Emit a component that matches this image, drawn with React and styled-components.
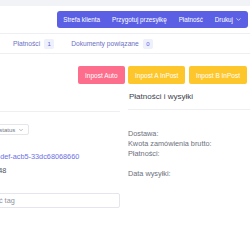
import React from "react";
import styled, { createGlobalStyle } from "styled-components";
import { ChevronDown } from "lucide-react";

const actions = [
  { label: "Strefa klienta" },
  { label: "Przygotuj przesyłkę" },
  { label: "Płatność" },
  { label: "Drukuj", menu: true }
];

const tabs = [
  { label: "Płatności", count: 1 },
  { label: "Dokumenty powiązane", count: 0 }
];

const shipping = [
  { label: "Dostawa:" },
  { label: "Kwota zamówienia brutto:" },
  { label: "Płatności:" },
  { label: "" },
  { label: "Data wysyłki:" }
];

export default function App() {
  return (
    <>
      <GlobalStyle />
      <Page>
        <Card>
          {/* Akcje zamówienia */}
          <TopBar>
            <ButtonGroup>
              {actions.map(a => (
                <GroupButton key={a.label}>
                  {a.label}
                  {a.menu && <ChevronDown size={7} strokeWidth={2.2} />}
                </GroupButton>
              ))}
            </ButtonGroup>
          </TopBar>

          {/* Zakładki */}
          <Tabs>
            {tabs.map(t => (
              <Tab key={t.label}>
                {t.label}
                <Badge>{t.count}</Badge>
              </Tab>
            ))}
          </Tabs>

          {/* Etykiety InPost */}
          <LabelRow>
            <LabelButton $tone="pink">Inpost Auto</LabelButton>
            <LabelButton $tone="yellow">Inpost A InPost</LabelButton>
            <LabelButton $tone="yellow">Inpost B InPost</LabelButton>
          </LabelRow>

          <Columns>
            <LeftCol>
              <LeftHeader />
              <StatusSelect>
                Zmień status
                <ChevronDown size={6} strokeWidth={2} />
              </StatusSelect>
              <OrderLink>3f1b2c4e-9a7d-4def-acb5-33dc68068660</OrderLink>
              <OrderNumber>#10048</OrderNumber>
              <TagInput placeholder="Wpisz, aby dodać tag" />
            </LeftCol>

            <RightCol>
              <SectionTitle>Płatności i wysyłki</SectionTitle>
              <InfoList>
                {shipping.map((s, i) => (
                  <InfoRow key={i}>{s.label}</InfoRow>
                ))}
              </InfoList>
            </RightCol>
          </Columns>
        </Card>
      </Page>
    </>
  );
}

const GlobalStyle = createGlobalStyle`
  html, body {
    margin: 0;
    padding: 0;
    background: #f2f3f7;
    overflow: hidden;
  }
  body {
    font-family: "Liberation Sans", Arial, sans-serif;
  }
  * {
    box-sizing: border-box;
  }
`;

const Page = styled.div`
  width: 250px;
  height: 250px;
  padding-top: 6px;
  overflow: hidden;
`;

const Card = styled.div`
  background: #fff;
  height: 244px;
`;

const TopBar = styled.div`
  display: flex;
  justify-content: flex-end;
  padding: 5px 2px 5px 0;
  border-bottom: 1px solid #eeeff3;
`;

const ButtonGroup = styled.div`
  display: flex;
  height: 17px;
  background: #5a5fe3;
  border-radius: 3px;
`;

const GroupButton = styled.div`
  display: flex;
  align-items: center;
  gap: 2px;
  padding: 0 6px;
  color: #fff;
  font-size: 6.3px;
  white-space: nowrap;
`;

const Tabs = styled.div`
  display: flex;
  align-items: center;
  gap: 17px;
  height: 20px;
  padding-left: 13px;
  border-bottom: 1px solid #eeeff3;
`;

const Tab = styled.div`
  display: flex;
  align-items: center;
  gap: 4px;
  color: #6a70c4;
  font-size: 6.7px;
  white-space: nowrap;
`;

const Badge = styled.span`
  display: inline-flex;
  align-items: center;
  justify-content: center;
  width: 10px;
  height: 10px;
  border-radius: 2px;
  background: #eef0fb;
  color: #5a5fe3;
  font-size: 6px;
`;

const LabelRow = styled.div`
  display: flex;
  justify-content: flex-end;
  gap: 3.5px;
  padding: 12px 3px 0 0;
`;

const LabelButton = styled.div`
  display: flex;
  align-items: center;
  height: 18px;
  padding: 0 7px;
  border-radius: 2px;
  color: #fff;
  font-size: 6.5px;
  white-space: nowrap;
  background: ${({ $tone }) => ($tone === "pink" ? "#fd6e8d" : "#fdc72c")};
`;

const Columns = styled.div`
  display: grid;
  grid-template-columns: 120px 1fr;
  column-gap: 8px;
`;

const LeftCol = styled.div`
  display: flex;
  flex-direction: column;
  align-items: flex-start;
`;

const LeftHeader = styled.div`
  align-self: stretch;
  height: 28px;
  border-bottom: 1px solid #eeeff3;
`;

const StatusSelect = styled.div`
  display: flex;
  align-items: center;
  gap: 3px;
  height: 11px;
  margin: 12px 0 0 -24px;
  padding: 0 4px;
  border: 1px solid #e4e6eb;
  border-radius: 2px;
  color: #737886;
  font-size: 6px;
  white-space: nowrap;
`;

const OrderLink = styled.span`
  margin: 17px 0 0 -55px;
  line-height: 10px;
  color: #6b70e6;
  font-size: 7.3px;
  white-space: nowrap;
`;

const OrderNumber = styled.span`
  margin: 4px 0 0 -18px;
  line-height: 10px;
  color: #4d5260;
  font-size: 7.3px;
  white-space: nowrap;
`;

const TagInput = styled.input`
  width: calc(100% + 61px);
  height: 15px;
  margin: 17px 0 0 -61px;
  padding: 0 5px;
  border: 1px solid #e4e6eb;
  border-radius: 2px;
  font-family: inherit;
  font-size: 7.3px;
  outline: none;
  &::placeholder {
    color: #8e94a0;
  }
`;

const RightCol = styled.div`
  display: flex;
  flex-direction: column;
`;

const SectionTitle = styled.div`
  padding: 7px 0 7px 1px;
  line-height: 11px;
  border-bottom: 1px solid #eeeff3;
  color: #3d414c;
  font-size: 8px;
  white-space: nowrap;
`;

const InfoList = styled.div`
  display: flex;
  flex-direction: column;
  padding-top: 19px;
`;

const InfoRow = styled.div`
  height: 10px;
  line-height: 10px;
  color: #6c717d;
  font-size: 7.3px;
  white-space: nowrap;
`;
